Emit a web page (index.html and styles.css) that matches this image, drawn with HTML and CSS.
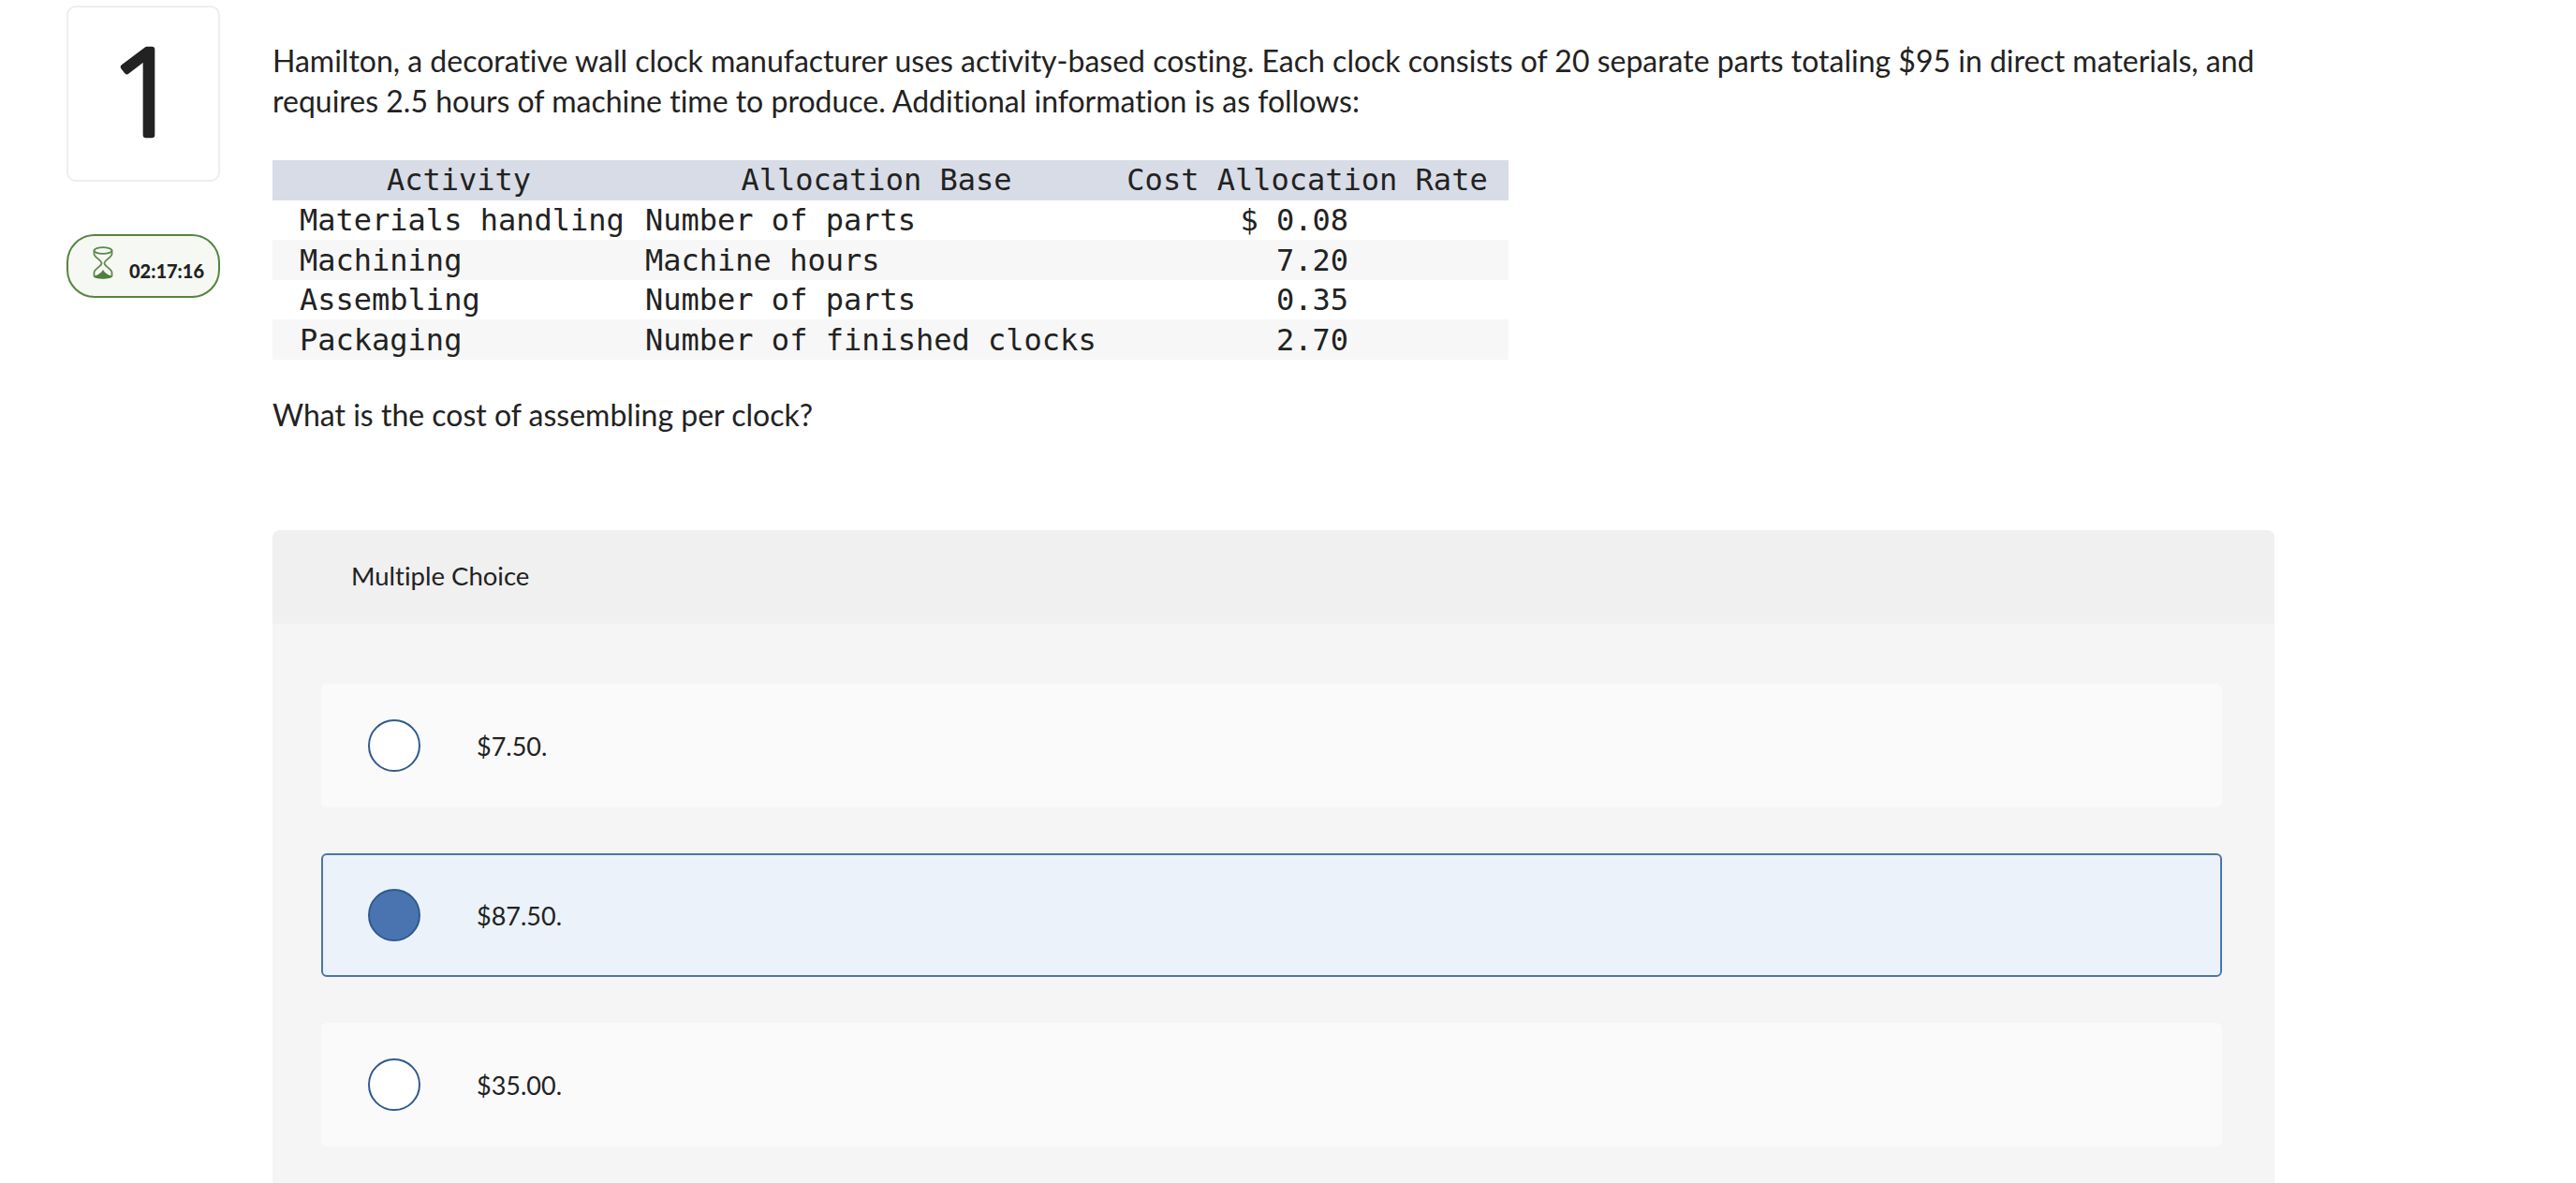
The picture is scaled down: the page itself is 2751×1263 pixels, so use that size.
FILE: index.html
```html
<!DOCTYPE html>
<html lang="en">
<head>
<meta charset="utf-8">
<title>Question 1</title>
<link rel="stylesheet" href="styles.css">
</head>
<body>
<main class="page">
  <aside class="side">
    <div class="number-card">
      <svg class="number-svg" viewBox="0 0 160 184" width="160" height="184"><text class="number" x="83" y="135.750" text-anchor="middle">1</text></svg>
    </div>
    <div class="timer">
      <svg class="hourglass" viewBox="0 0 22 36" width="22" height="36" aria-hidden="true">
        <ellipse cx="11" cy="4.500" rx="9.500" ry="3.300" fill="none" stroke="#5a8a48" stroke-width="1.800"/>
        <path d="M1.500 4.500v3.500c0 4 8 6.500 8 10s-8 6-8 10v3.500c0 3 19 3 19 0v-3.500c0-4-8-6.500-8-10s8-6 8-10v-3.500" fill="none" stroke="#5a8a48" stroke-width="1.800"/>
        <path d="M2 31.500c3.500-.8 7-3 9-6.500 2 3.500 5.500 5.700 9 6.500v1c-2 2.500-16 2.500-18 0z" fill="#4f7f3e"/>
      </svg>
      <span class="timer-text">02:17:16</span>
    </div>
  </aside>
  <section class="content">
    <p class="text intro">Hamilton, a decorative wall clock manufacturer uses activity-based costing. Each clock consists of 20 separate parts totaling $95 in direct materials, and requires 2.5 hours of machine time to produce. Additional information is as follows:</p>
    <table class="data">
      <colgroup><col class="c1"><col class="c2"><col class="c3"></colgroup>
      <thead>
        <tr><th class="h1">Activity</th><th class="h2">Allocation Base</th><th>Cost Allocation Rate</th></tr>
      </thead>
      <tbody>
        <tr><td class="a">Materials handling</td><td class="b">Number of parts</td><td class="r">$ 0.08</td></tr>
        <tr><td class="a">Machining</td><td class="b">Machine hours</td><td class="r">7.20</td></tr>
        <tr><td class="a">Assembling</td><td class="b">Number of parts</td><td class="r">0.35</td></tr>
        <tr><td class="a">Packaging</td><td class="b">Number of finished clocks</td><td class="r">2.70</td></tr>
      </tbody>
    </table>
    <p class="text ask">What is the cost of assembling per clock?</p>
    <div class="panel">
      <div class="panel-head"><span class="panel-title">Multiple Choice</span></div>
      <div class="options">
        <div class="option"><span class="radio"></span><span class="label">$7.50.</span></div>
        <div class="option selected"><span class="radio"></span><span class="label">$87.50.</span></div>
        <div class="option"><span class="radio"></span><span class="label">$35.00.</span></div>
      </div>
    </div>
  </section>
</main>
</body>
</html>
```
FILE: styles.css
```css
* { box-sizing: border-box; }
html, body { margin: 0; height: 1263px; overflow: hidden; background: #fff; }
body { font-family: "Lato", "Open Sans", sans-serif; color: #222; font-variant-ligatures: none; }
.page { display: flex; height: 1263px; padding-left: 71px; }
.side { width: 220px; flex: none; padding-top: 6px; }
.number-card {
  width: 164px; height: 188px; border: 2px solid #eee; border-radius: 10px;
  display: flex; align-items: center; justify-content: center;
}
.number-svg { display: block; }
.number { font-family: "Open Sans", sans-serif; font-size: 127px; font-weight: 300; fill: #222; stroke: #222; stroke-width: 6.500px; stroke-linejoin: round; }
.timer {
  margin-top: 56px; width: 164px; height: 68px; border: 2px solid #55853f; border-radius: 30px;
  background: #f6f8f4; display: flex; align-items: flex-start; padding: 11px 0 0 26px;
}
.hourglass { flex: none; }
.timer-text { font-family: "Lato", sans-serif; font-weight: 900; font-size: 20px; line-height: 28px; margin: 12px 0 0 17px; color: #222; }
.content { width: 2138px; flex: none; }
.text { margin: 0; font-size: 32px; line-height: 43px; }
.intro { margin-top: 43px; width: 2138px; }
.ask { margin-top: 37px; }
.data {
  margin-top: 42px; border-collapse: collapse; table-layout: fixed; width: 1320px;
  font-family: "DejaVu Sans Mono", monospace; font-size: 32px; color: #222;
}
.c1 { width: 387px; } .c2 { width: 503px; } .c3 { width: 430px; }
.data th { background: #d8dce6; font-weight: 400; height: 43px; padding: 0; text-align: center; line-height: 43px; }
.data th.h1 { padding-left: 11px; }
.data th.h2 { padding-left: 13px; }
.data td { height: 42px; padding: 0; line-height: 42px; white-space: pre; }
.data tbody tr:nth-child(even) td { height: 43px; background: #f7f7f7; }
.data td.a { padding-left: 29px; }
.data td.b { padding-left: 11px; }
.data td.r { text-align: right; padding-right: 171px; }
.panel { margin-top: 102px; height: 697px; background: #f5f5f5; border-radius: 8px 8px 0 0; }
.panel-head { height: 100px; background: #f0f0f0; border-radius: 8px 8px 0 0; padding: 0 0 3px 84px; display: flex; align-items: center; font-size: 27.500px; color: #222; }
.options { padding: 64px 56px 0 52px; display: flex; flex-direction: column; gap: 49px; }
.option {
  height: 132px; background: #fafafa; border-radius: 6px; display: flex; align-items: center; padding-left: 48px; border: 2px solid #fafafa;
}
.option.selected { background: #ebf2fa; border-color: #4a74b0; }
.radio { width: 56px; height: 56px; border-radius: 50%; border: 2px solid #2f5a8f; background: #fff; flex: none; }
.option.selected .radio { background: #4a74b0; }
.label { margin-left: 60px; font-size: 27px; color: #222; }
```
